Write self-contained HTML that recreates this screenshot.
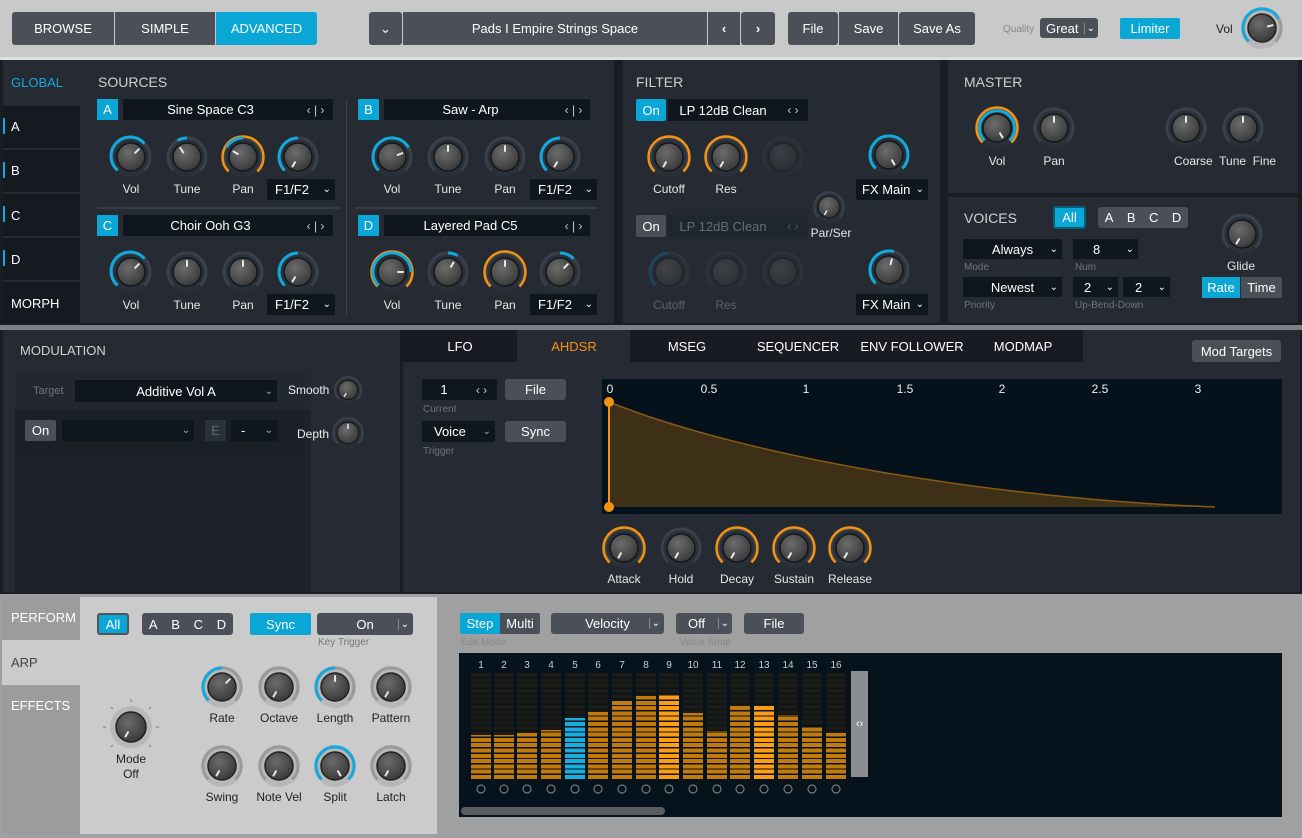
<!DOCTYPE html><html><head><meta charset="utf-8"><style>
*{box-sizing:border-box;margin:0;padding:0}
body{width:1302px;height:838px;overflow:hidden;background:#c9c9c9;font-family:"Liberation Sans",sans-serif;position:relative}
div,svg{position:absolute}
.bx{display:flex;align-items:center;justify-content:center;font-size:13px;color:#fff;white-space:nowrap}
.btn{background:#4b5058;border-radius:3px}
.cy{background:#0aa6d6}
.fd{background:#10161d}
.l{width:80px;margin-left:-40px;text-align:center;color:#e6e6e6;font-size:12px;white-space:nowrap}
.ld{width:80px;margin-left:-40px;text-align:center;color:#222;font-size:12px;white-space:nowrap}
.h{color:#d0d0d0;font-size:14px}
.sm{font-size:10px;color:#6e747c}
.k{width:44px;height:44px}
.b{fill:none;stroke:#12a9dd;stroke-width:3}
.o{fill:none;stroke:#f39312;stroke-width:2.5}
.p{stroke:#e8e8e8;stroke-width:2;stroke-linecap:round}
.ar{color:#ccc;font-size:12px}
.cl{position:absolute;width:20px;top:673px;height:106px;background:repeating-linear-gradient(#1c1b15 0 4px,#07131c 4px 5.3px)}
.fl{position:absolute;width:20px;bottom:59px;background:repeating-linear-gradient(to top,#c27a0a 0 4px,#07131c 4px 5.3px)}
</style></head><body>
<svg width="0" height="0"><defs>
<radialGradient id="g" cx=".4" cy=".35" r=".75"><stop offset="0" stop-color="#6c6c6c"/><stop offset="1" stop-color="#333"/></radialGradient>
<symbol id="kd" viewBox="0 0 44 44"><circle cx="22" cy="22" r="20" fill="#2a3038"/><path d="M8.6 35.4A19 19 0 1 1 35.4 35.4" fill="none" stroke="#3a414b" stroke-width="3"/><circle cx="22" cy="22" r="14" fill="url(#g)" stroke="#13171c" stroke-width="1.5"/></symbol>
<symbol id="kl" viewBox="0 0 44 44"><circle cx="22" cy="22" r="21" fill="#b8b8b8"/><path d="M8.6 35.4A19 19 0 1 1 35.4 35.4" fill="none" stroke="#9a9a9a" stroke-width="3"/><circle cx="22" cy="22" r="14" fill="url(#g)" stroke="#222" stroke-width="1.5"/></symbol>
</defs></svg>

<!-- top bar -->
<div class="bx btn" style="left:12px;top:12px;width:102px;height:33px;border-radius:3px 0 0 3px">BROWSE</div>
<div class="bx btn" style="left:115px;top:12px;width:100px;height:33px;border-radius:0">SIMPLE</div>
<div class="bx cy" style="left:216px;top:12px;width:101px;height:33px;border-radius:0 3px 3px 0">ADVANCED</div>
<div class="bx btn" style="left:369px;top:12px;width:33px;height:33px">&#8964;</div>
<div class="bx btn" style="left:403px;top:12px;width:304px;height:33px;border-radius:0">Pads I Empire Strings Space</div>
<div class="bx btn" style="left:708px;top:12px;width:32px;height:33px;border-radius:0;font-weight:bold">&#8249;</div>
<div class="bx btn" style="left:741px;top:12px;width:34px;height:33px;font-weight:bold">&#8250;</div>
<div class="bx btn" style="left:788px;top:12px;width:50px;height:33px">File</div>
<div class="bx btn" style="left:839px;top:12px;width:59px;height:33px;border-radius:0">Save</div>
<div class="bx btn" style="left:899px;top:12px;width:76px;height:33px">Save As</div>
<div style="left:1003px;top:24px;font-size:10px;color:#888">Quality</div>
<div class="bx btn" style="left:1040px;top:18px;width:58px;height:20px;justify-content:flex-start;padding-left:6px">Great<span style="position:absolute;right:3px;font-size:10px;border-left:1px solid #888;padding-left:2px">&#8964;</span></div>
<div class="bx cy" style="left:1120px;top:18px;width:60px;height:21px;border-radius:2px">Limiter</div>
<div style="left:1216px;top:22px;font-size:12px;color:#222">Vol</div>
<svg class="k" style="left:1240px;top:6px" viewBox="0 0 44 44"><use href="#kl"/><path class="b" d="M8.6 35.4A19 19 0 1 1 38.5 12.5"/><line class="p" x1="27.8" y1="20.4" x2="32.6" y2="19.2"/></svg>

<!-- main dark -->
<div style="left:0;top:57px;width:1302px;height:3px;background:#e0e0e0"></div>
<div style="left:0;top:60px;width:1302px;height:265px;background:#1a1e24"></div>
<div style="left:3px;top:60px;width:611px;height:263px;background:#262b33"></div>
<div style="left:623px;top:60px;width:317px;height:263px;background:#262b33"></div>
<div style="left:948px;top:60px;width:350px;height:133px;background:#262b33"></div>
<div style="left:948px;top:197px;width:350px;height:126px;background:#262b33"></div>
<!-- sidebar -->
<div style="left:11px;top:75px;color:#12a9dd;font-size:13px">GLOBAL</div>
<div style="left:3px;top:106px;width:77px;height:42px;background:#151a20"></div>
<div style="left:3px;top:150px;width:77px;height:42px;background:#151a20"></div>
<div style="left:3px;top:194px;width:77px;height:42px;background:#151a20"></div>
<div style="left:3px;top:238px;width:77px;height:42px;background:#151a20"></div>
<div style="left:3px;top:282px;width:77px;height:41px;background:#151a20"></div>
<div style="left:3px;top:118px;width:2px;height:16px;background:#12a9dd"></div>
<div style="left:3px;top:162px;width:2px;height:16px;background:#12a9dd"></div>
<div style="left:3px;top:206px;width:2px;height:16px;background:#12a9dd"></div>
<div style="left:3px;top:250px;width:2px;height:16px;background:#12a9dd"></div>
<div style="left:11px;top:119px;color:#fff;font-size:13px">A</div>
<div style="left:11px;top:163px;color:#fff;font-size:13px">B</div>
<div style="left:11px;top:208px;color:#fff;font-size:13px">C</div>
<div style="left:11px;top:252px;color:#fff;font-size:13px">D</div>
<div style="left:11px;top:296px;color:#fff;font-size:13px">MORPH</div>

<div class="h" style="left:98px;top:74px">SOURCES</div>
<div style="left:346px;top:100px;width:1px;height:215px;background:#3a414b"></div>
<div style="left:97px;top:207px;width:242px;height:2px;background:#353c45"></div>
<div style="left:355px;top:207px;width:242px;height:2px;background:#353c45"></div>
<!-- source headers -->
<div class="bx cy" style="left:97px;top:99px;width:21px;height:21px">A</div>
<div class="bx fd" style="left:123px;top:99px;width:175px;height:21px">Sine Space C3</div>
<div class="bx fd ar" style="left:298px;top:99px;width:35px;height:21px">&#8249; | &#8250;</div>
<div class="bx cy" style="left:358px;top:99px;width:21px;height:21px">B</div>
<div class="bx fd" style="left:384px;top:99px;width:173px;height:21px">Saw - Arp</div>
<div class="bx fd ar" style="left:557px;top:99px;width:33px;height:21px">&#8249; | &#8250;</div>
<div class="bx cy" style="left:97px;top:215px;width:21px;height:21px">C</div>
<div class="bx fd" style="left:123px;top:215px;width:175px;height:21px">Choir Ooh G3</div>
<div class="bx fd ar" style="left:298px;top:215px;width:35px;height:21px">&#8249; | &#8250;</div>
<div class="bx cy" style="left:358px;top:215px;width:21px;height:21px">D</div>
<div class="bx fd" style="left:384px;top:215px;width:173px;height:21px">Layered Pad C5</div>
<div class="bx fd ar" style="left:557px;top:215px;width:33px;height:21px">&#8249; | &#8250;</div>
<!-- F1/F2 dropdowns -->
<div class="bx fd" style="left:267px;top:179px;width:68px;height:21px;justify-content:flex-start;padding-left:8px">F1/F2<span style="position:absolute;right:4px;font-size:10px">&#8964;</span></div>
<div class="bx fd" style="left:530px;top:179px;width:67px;height:21px;justify-content:flex-start;padding-left:8px">F1/F2<span style="position:absolute;right:4px;font-size:10px">&#8964;</span></div>
<div class="bx fd" style="left:267px;top:294px;width:68px;height:21px;justify-content:flex-start;padding-left:8px">F1/F2<span style="position:absolute;right:4px;font-size:10px">&#8964;</span></div>
<div class="bx fd" style="left:530px;top:294px;width:67px;height:21px;justify-content:flex-start;padding-left:8px">F1/F2<span style="position:absolute;right:4px;font-size:10px">&#8964;</span></div>
<!-- source knobs -->
<svg class="k" style="left:109px;top:135px" viewBox="0 0 44 44"><use href="#kd"/><path class="b" d="M8.6 35.4A19 19 0 1 1 35.4 8.6"/><line class="p" x1="26.2" y1="17.8" x2="29.8" y2="14.2"/></svg>
<svg class="k" style="left:165px;top:135px" viewBox="0 0 44 44"><use href="#kd"/><path class="b" d="M12.5 5.5A19 19 0 0 1 22 3"/><line class="p" x1="18.2" y1="17.4" x2="15.3" y2="13"/></svg>
<svg class="k" style="left:221px;top:135px" viewBox="0 0 44 44"><use href="#kd"/><path class="o" d="M7.5 36.5A20.5 20.5 0 1 1 36.5 36.5"/><path class="b" d="M22 3A19 19 0 0 0 5.5 12.5"/><line class="p" x1="16.8" y1="19" x2="12.5" y2="16.5"/></svg>
<svg class="k" style="left:276px;top:135px" viewBox="0 0 44 44"><use href="#kd"/><path class="b" d="M8.6 35.4A19 19 0 0 1 22 3"/><line class="p" x1="19" y1="27.2" x2="16.5" y2="31.5"/></svg>
<svg class="k" style="left:370px;top:135px" viewBox="0 0 44 44"><use href="#kd"/><path class="b" d="M8.6 35.4A19 19 0 1 1 38.5 12.5"/><line class="p" x1="27.6" y1="20" x2="32.3" y2="18.2"/></svg>
<svg class="k" style="left:426px;top:135px" viewBox="0 0 44 44"><use href="#kd"/><line class="p" x1="22" y1="16" x2="22" y2="11"/></svg>
<svg class="k" style="left:483px;top:135px" viewBox="0 0 44 44"><use href="#kd"/><line class="p" x1="22" y1="16" x2="22" y2="11"/></svg>
<svg class="k" style="left:538px;top:135px" viewBox="0 0 44 44"><use href="#kd"/><path class="b" d="M8.6 35.4A19 19 0 0 1 22 3"/><line class="p" x1="19" y1="27.2" x2="16.5" y2="31.5"/></svg>
<svg class="k" style="left:109px;top:250px" viewBox="0 0 44 44"><use href="#kd"/><path class="b" d="M8.6 35.4A19 19 0 1 1 35.4 8.6"/><line class="p" x1="26.2" y1="17.8" x2="29.8" y2="14.2"/></svg>
<svg class="k" style="left:165px;top:250px" viewBox="0 0 44 44"><use href="#kd"/><line class="p" x1="22" y1="16" x2="22" y2="11"/></svg>
<svg class="k" style="left:221px;top:250px" viewBox="0 0 44 44"><use href="#kd"/><line class="p" x1="22" y1="16" x2="22" y2="11"/></svg>
<svg class="k" style="left:276px;top:250px" viewBox="0 0 44 44"><use href="#kd"/><path class="b" d="M8.6 35.4A19 19 0 0 1 22 3"/><line class="p" x1="19" y1="27.2" x2="16.5" y2="31.5"/></svg>
<svg class="k" style="left:370px;top:250px" viewBox="0 0 44 44"><use href="#kd"/><path class="o" d="M7.5 36.5A20.5 20.5 0 1 1 36.5 36.5"/><path class="b" d="M8.6 35.4A19 19 0 1 1 41 22"/><line class="p" x1="28" y1="22" x2="33" y2="22"/></svg>
<svg class="k" style="left:426px;top:250px" viewBox="0 0 44 44"><use href="#kd"/><path class="b" d="M22 3A19 19 0 0 1 31.5 5.5"/><line class="p" x1="25" y1="16.8" x2="27.5" y2="12.5"/></svg>
<svg class="k" style="left:483px;top:250px" viewBox="0 0 44 44"><use href="#kd"/><path class="o" d="M7.5 36.5A20.5 20.5 0 1 1 36.5 36.5"/><line class="p" x1="22" y1="16" x2="22" y2="11"/></svg>
<svg class="k" style="left:538px;top:250px" viewBox="0 0 44 44"><use href="#kd"/><path class="b" d="M22 3A19 19 0 0 1 35.4 8.6"/><line class="p" x1="26.2" y1="17.8" x2="29.8" y2="14.2"/></svg>
<div class="l" style="left:131px;top:182px">Vol</div><div class="l" style="left:187px;top:182px">Tune</div><div class="l" style="left:243px;top:182px">Pan</div>
<div class="l" style="left:392px;top:182px">Vol</div><div class="l" style="left:448px;top:182px">Tune</div><div class="l" style="left:505px;top:182px">Pan</div>
<div class="l" style="left:131px;top:298px">Vol</div><div class="l" style="left:187px;top:298px">Tune</div><div class="l" style="left:243px;top:298px">Pan</div>
<div class="l" style="left:392px;top:298px">Vol</div><div class="l" style="left:448px;top:298px">Tune</div><div class="l" style="left:505px;top:298px">Pan</div>

<!-- filter -->
<div class="h" style="left:636px;top:74px">FILTER</div>
<div class="bx cy" style="left:636px;top:99px;width:30px;height:22px;border-radius:2px">On</div>
<div class="bx fd" style="left:668px;top:99px;width:110px;height:22px">LP 12dB Clean</div>
<div class="bx fd ar" style="left:778px;top:99px;width:30px;height:22px">&#8249; &#8250;</div>
<div class="bx btn" style="left:636px;top:215px;width:30px;height:22px;border-radius:2px">On</div>
<div class="bx" style="left:668px;top:215px;width:110px;height:22px;background:#20262e;color:#666c74">LP 12dB Clean</div>
<div class="bx ar" style="left:778px;top:215px;width:30px;height:22px;background:#20262e;color:#555">&#8249; &#8250;</div>
<svg class="k" style="left:647px;top:135px" viewBox="0 0 44 44"><use href="#kd"/><path class="o" d="M7.5 36.5A20.5 20.5 0 1 1 36.5 36.5"/><line class="p" x1="19" y1="27.2" x2="16.5" y2="31.5"/></svg>
<svg class="k" style="left:704px;top:135px" viewBox="0 0 44 44"><use href="#kd"/><path class="o" d="M7.5 36.5A20.5 20.5 0 1 1 36.5 36.5"/><line class="p" x1="19" y1="27.2" x2="16.5" y2="31.5"/></svg>
<svg class="k" style="left:761px;top:135px;opacity:.3" viewBox="0 0 44 44"><use href="#kd"/></svg>
<svg class="k" style="left:867px;top:133px" viewBox="0 0 44 44"><use href="#kd"/><path class="b" d="M8.6 35.4A19 19 0 1 1 35.4 35.4"/><line class="p" x1="25" y1="27.2" x2="27.5" y2="31.5"/></svg>
<svg class="k" style="left:812px;top:190px;width:34px;height:34px" viewBox="0 0 44 44"><use href="#kd"/><line class="p" x1="19" y1="27.2" x2="16.5" y2="31.5"/></svg>
<div class="l" style="left:831px;top:226px">Par/Ser</div>
<svg class="k" style="left:647px;top:250px;opacity:.4" viewBox="0 0 44 44"><use href="#kd"/><path class="b" d="M8.6 35.4A19 19 0 0 1 22 3" style="stroke:#1a6e8c"/></svg>
<svg class="k" style="left:704px;top:250px;opacity:.35" viewBox="0 0 44 44"><use href="#kd"/></svg>
<svg class="k" style="left:761px;top:250px;opacity:.35" viewBox="0 0 44 44"><use href="#kd"/></svg>
<svg class="k" style="left:867px;top:248px" viewBox="0 0 44 44"><use href="#kd"/><path class="b" d="M8.6 35.4A19 19 0 0 1 27 3.6"/><line class="p" x1="23.6" y1="16.2" x2="24.8" y2="11.4"/></svg>
<div class="bx fd" style="left:856px;top:179px;width:72px;height:21px;justify-content:flex-start;padding-left:6px">FX Main<span style="position:absolute;right:4px;font-size:10px">&#8964;</span></div>
<div class="bx fd" style="left:856px;top:294px;width:72px;height:21px;justify-content:flex-start;padding-left:6px">FX Main<span style="position:absolute;right:4px;font-size:10px">&#8964;</span></div>
<div class="l" style="left:669px;top:182px">Cutoff</div><div class="l" style="left:726px;top:182px">Res</div>
<div class="l" style="left:669px;top:298px;color:#5c636c">Cutoff</div><div class="l" style="left:726px;top:298px;color:#5c636c">Res</div>

<!-- master -->
<div class="h" style="left:964px;top:74px">MASTER</div>
<svg class="k" style="left:975px;top:106px" viewBox="0 0 44 44"><use href="#kd"/><path class="o" d="M7.5 36.5A20.5 20.5 0 1 1 36.5 36.5"/><path class="b" d="M9.5 34.5A17.5 17.5 0 1 1 34.5 34.5"/><line class="p" x1="25" y1="27.2" x2="27.5" y2="31.5"/></svg>
<svg class="k" style="left:1032px;top:106px" viewBox="0 0 44 44"><use href="#kd"/><line class="p" x1="22" y1="16" x2="22" y2="11"/></svg>
<svg class="k" style="left:1164px;top:106px" viewBox="0 0 44 44"><use href="#kd"/><line class="p" x1="22" y1="16" x2="22" y2="11"/></svg>
<svg class="k" style="left:1221px;top:106px" viewBox="0 0 44 44"><use href="#kd"/><line class="p" x1="22" y1="16" x2="22" y2="11"/></svg>
<div class="l" style="left:997px;top:154px">Vol</div><div class="l" style="left:1054px;top:154px">Pan</div><div class="l" style="left:1214px;top:154px">Coarse&nbsp; Tune&nbsp; Fine</div>
<!-- voices -->
<div class="h" style="left:964px;top:210px">VOICES</div>
<div class="bx cy" style="left:1053px;top:206px;width:33px;height:23px;border:2px solid #0a5e7a;border-radius:3px">All</div>
<div class="bx btn" style="left:1098px;top:207px;width:90px;height:21px;justify-content:space-around">A<span>B</span><span>C</span><span>D</span></div>
<div class="bx fd" style="left:963px;top:239px;width:99px;height:20px">Always<span style="position:absolute;right:4px;font-size:10px">&#8964;</span></div>
<div class="bx fd" style="left:1073px;top:239px;width:65px;height:20px;justify-content:flex-start;padding-left:20px">8<span style="position:absolute;right:4px;font-size:10px">&#8964;</span></div>
<div class="sm" style="left:964px;top:262px">Mode</div><div class="sm" style="left:1075px;top:262px">Num</div>
<div class="bx fd" style="left:963px;top:277px;width:99px;height:20px">Newest<span style="position:absolute;right:4px;font-size:10px">&#8964;</span></div>
<div class="bx fd" style="left:1073px;top:277px;width:45px;height:20px;justify-content:flex-start;padding-left:11px">2<span style="position:absolute;right:4px;font-size:10px">&#8964;</span></div>
<div class="bx fd" style="left:1123px;top:277px;width:47px;height:20px;justify-content:flex-start;padding-left:12px">2<span style="position:absolute;right:4px;font-size:10px">&#8964;</span></div>
<div class="sm" style="left:964px;top:300px">Priority</div><div class="sm" style="left:1075px;top:300px">Up-Bend-Down</div>
<svg class="k" style="left:1220px;top:212px" viewBox="0 0 44 44"><use href="#kd"/><line class="p" x1="19" y1="27.2" x2="16.5" y2="31.5"/></svg>
<div class="l" style="left:1241px;top:259px">Glide</div>
<div class="bx cy" style="left:1202px;top:277px;width:38px;height:21px">Rate</div>
<div class="bx btn" style="left:1241px;top:277px;width:41px;height:21px;border-radius:0 2px 2px 0">Time</div>

<!-- modulation -->
<div style="left:0;top:325px;width:1302px;height:5px;background:#7d8187"></div>
<div style="left:0;top:330px;width:1302px;height:264px;background:#1a1e24"></div>
<div style="left:3px;top:330px;width:397px;height:262px;background:#262b33"></div>
<div style="left:403px;top:330px;width:897px;height:262px;background:#262b33"></div>
<div class="h" style="left:20px;top:343px;font-size:13px">MODULATION</div>
<div style="left:15px;top:370px;width:296px;height:222px;background:#1e232a"></div>
<div style="left:15px;top:370px;width:296px;height:40px;background:#232830"></div>
<div style="left:15px;top:410px;width:288px;height:45px;background:#1b2026"></div>
<div class="sm" style="left:33px;top:385px;font-size:11px">Target</div>
<div class="bx fd" style="left:75px;top:380px;width:202px;height:22px">Additive Vol A<span style="position:absolute;right:4px;font-size:10px;color:#aaa">&#8964;</span></div>
<div style="left:288px;top:383px;color:#eee;font-size:12px">Smooth</div>
<svg class="k" style="left:333px;top:375px;width:30px;height:30px" viewBox="0 0 44 44"><use href="#kd"/><line class="p" x1="19" y1="27.2" x2="16.5" y2="31.5"/></svg>
<div class="bx btn" style="left:25px;top:420px;width:31px;height:21px;border-radius:2px">On</div>
<div class="bx fd" style="left:62px;top:420px;width:132px;height:21px"><span style="position:absolute;right:4px;font-size:10px;color:#aaa">&#8964;</span></div>
<div class="bx" style="left:205px;top:420px;width:21px;height:21px;background:#2b3139;color:#666">E</div>
<div class="bx fd" style="left:231px;top:420px;width:46px;height:21px;justify-content:flex-start;padding-left:10px">-<span style="position:absolute;right:4px;font-size:10px;color:#aaa">&#8964;</span></div>
<div style="left:297px;top:427px;color:#eee;font-size:12px">Depth</div>
<svg class="k" style="left:331px;top:416px;width:34px;height:34px" viewBox="0 0 44 44"><use href="#kd"/><line class="p" x1="22" y1="16" x2="22" y2="11"/></svg>
<!-- tabs -->
<div style="left:400px;top:330px;width:683px;height:32px;background:#181c22"></div>
<div style="left:517px;top:330px;width:113px;height:32px;background:#262b33"></div>
<div class="bx" style="left:420px;top:338px;width:80px;height:16px">LFO</div>
<div class="bx" style="left:534px;top:338px;width:80px;height:16px;color:#f39312">AHDSR</div>
<div class="bx" style="left:647px;top:338px;width:80px;height:16px">MSEG</div>
<div class="bx" style="left:748px;top:338px;width:100px;height:16px">SEQUENCER</div>
<div class="bx" style="left:852px;top:338px;width:120px;height:16px">ENV FOLLOWER</div>
<div class="bx" style="left:983px;top:338px;width:80px;height:16px">MODMAP</div>
<div class="bx btn" style="left:1192px;top:340px;width:89px;height:22px">Mod Targets</div>
<div class="bx fd" style="left:422px;top:379px;width:44px;height:21px">1</div>
<div class="bx fd ar" style="left:466px;top:379px;width:31px;height:21px">&#8249; &#8250;</div>
<div class="bx btn" style="left:505px;top:379px;width:61px;height:21px">File</div>
<div class="sm" style="left:423px;top:404px">Current</div>
<div class="bx fd" style="left:422px;top:421px;width:73px;height:21px;justify-content:flex-start;padding-left:12px">Voice<span style="position:absolute;right:4px;font-size:10px;color:#aaa">&#8964;</span></div>
<div class="bx btn" style="left:505px;top:421px;width:61px;height:21px">Sync</div>
<div class="sm" style="left:423px;top:446px">Trigger</div>
<!-- graph -->
<div style="left:602px;top:379px;width:680px;height:135px;background:#06121b"></div>
<svg style="left:602px;top:379px" width="680" height="135"><path d="M7 23C150 80 400 120 613 128L7 128Z" fill="#3e3016"/><path d="M7 23C150 80 400 120 613 128" fill="none" stroke="#8a5a14" stroke-width="1.5"/><line x1="7" y1="23" x2="7" y2="128" stroke="#f39312" stroke-width="2"/><circle cx="7" cy="23" r="5" fill="#f39312"/><circle cx="7" cy="128" r="5" fill="#f39312"/>
<g fill="#eee" font-family="Liberation Sans" font-size="12" text-anchor="middle"><text x="8" y="14">0</text><text x="107" y="14">0.5</text><text x="204" y="14">1</text><text x="303" y="14">1.5</text><text x="400" y="14">2</text><text x="498" y="14">2.5</text><text x="596" y="14">3</text></g></svg>
<svg class="k" style="left:602px;top:526px" viewBox="0 0 44 44"><use href="#kd"/><path class="o" d="M7.5 36.5A20.5 20.5 0 1 1 36.5 36.5"/><line class="p" x1="19" y1="27.2" x2="16.5" y2="31.5"/></svg>
<svg class="k" style="left:659px;top:526px" viewBox="0 0 44 44"><use href="#kd"/><line class="p" x1="19" y1="27.2" x2="16.5" y2="31.5"/></svg>
<svg class="k" style="left:715px;top:526px" viewBox="0 0 44 44"><use href="#kd"/><path class="o" d="M7.5 36.5A20.5 20.5 0 1 1 36.5 36.5"/><line class="p" x1="19" y1="27.2" x2="16.5" y2="31.5"/></svg>
<svg class="k" style="left:772px;top:526px" viewBox="0 0 44 44"><use href="#kd"/><path class="o" d="M7.5 36.5A20.5 20.5 0 1 1 36.5 36.5"/><line class="p" x1="19" y1="27.2" x2="16.5" y2="31.5"/></svg>
<svg class="k" style="left:828px;top:526px" viewBox="0 0 44 44"><use href="#kd"/><path class="o" d="M7.5 36.5A20.5 20.5 0 1 1 36.5 36.5"/><line class="p" x1="19" y1="27.2" x2="16.5" y2="31.5"/></svg>
<div class="l" style="left:624px;top:572px">Attack</div><div class="l" style="left:681px;top:572px">Hold</div><div class="l" style="left:737px;top:572px">Decay</div><div class="l" style="left:794px;top:572px">Sustain</div><div class="l" style="left:850px;top:572px">Release</div>

<!-- bottom -->
<div style="left:0;top:594px;width:1302px;height:244px;background:#a0a0a0"></div>
<div style="left:80px;top:597px;width:357px;height:237px;background:#cbcbcb"></div>
<div style="left:2px;top:597px;width:78px;height:43px;background:#9c9c9c"></div>
<div style="left:2px;top:640px;width:78px;height:45px;background:#cbcbcb"></div>
<div style="left:2px;top:685px;width:78px;height:43px;background:#9c9c9c"></div>
<div style="left:2px;top:729px;width:78px;height:105px;background:#9c9c9c"></div>
<div style="left:11px;top:610px;color:#fff;font-size:13px">PERFORM</div>
<div style="left:11px;top:655px;color:#444;font-size:13px">ARP</div>
<div style="left:11px;top:698px;color:#fff;font-size:13px">EFFECTS</div>
<div class="bx cy" style="left:97px;top:613px;width:32px;height:22px;border:2px solid #555;border-radius:3px">All</div>
<div class="bx btn" style="left:142px;top:613px;width:91px;height:22px;justify-content:space-around">A<span>B</span><span>C</span><span>D</span></div>
<div class="bx cy" style="left:250px;top:613px;width:61px;height:22px;border-radius:2px">Sync</div>
<div class="bx btn" style="left:317px;top:613px;width:96px;height:22px">On<span style="position:absolute;right:4px;font-size:10px;border-left:1px solid #888;padding-left:2px">&#8964;</span></div>
<div style="left:318px;top:637px;font-size:10px;color:#777">Key Trigger</div>
<svg style="left:101px;top:697px" width="60" height="60" viewBox="0 0 60 60"><g stroke="#888" stroke-width="1.2"><line x1="30" y1="2" x2="30" y2="5"/><line x1="10" y1="10" x2="12" y2="12"/><line x1="50" y1="10" x2="48" y2="12"/><line x1="2" y1="30" x2="5" y2="30"/><line x1="58" y1="30" x2="55" y2="30"/><line x1="10" y1="50" x2="12" y2="48"/><line x1="50" y1="50" x2="48" y2="48"/></g><circle cx="30" cy="30" r="21" fill="#b8b8b8"/><circle cx="30" cy="30" r="15" fill="url(#g)" stroke="#222" stroke-width="1.5"/><line class="p" x1="27" y1="35.2" x2="24.5" y2="39.5"/></svg>
<div class="ld" style="left:131px;top:752px">Mode</div><div class="ld" style="left:131px;top:767px">Off</div>
<svg class="k" style="left:200px;top:665px" viewBox="0 0 44 44"><use href="#kl"/><path class="b" d="M8.6 35.4A19 19 0 0 1 22 3"/><line class="p" x1="26.2" y1="17.8" x2="29.8" y2="14.2"/></svg>
<svg class="k" style="left:257px;top:665px" viewBox="0 0 44 44"><use href="#kl"/><line class="p" x1="19" y1="27.2" x2="16.5" y2="31.5"/></svg>
<svg class="k" style="left:313px;top:665px" viewBox="0 0 44 44"><use href="#kl"/><path class="b" d="M8.6 35.4A19 19 0 0 1 22 3"/><line class="p" x1="22" y1="16" x2="22" y2="11"/></svg>
<svg class="k" style="left:369px;top:665px" viewBox="0 0 44 44"><use href="#kl"/><line class="p" x1="19" y1="27.2" x2="16.5" y2="31.5"/></svg>
<svg class="k" style="left:200px;top:744px" viewBox="0 0 44 44"><use href="#kl"/><line class="p" x1="19" y1="27.2" x2="16.5" y2="31.5"/></svg>
<svg class="k" style="left:257px;top:744px" viewBox="0 0 44 44"><use href="#kl"/><line class="p" x1="19" y1="27.2" x2="16.5" y2="31.5"/></svg>
<svg class="k" style="left:313px;top:744px" viewBox="0 0 44 44"><use href="#kl"/><path class="b" d="M8.6 35.4A19 19 0 1 1 35.4 35.4"/><line class="p" x1="25" y1="27.2" x2="27.5" y2="31.5"/></svg>
<svg class="k" style="left:369px;top:744px" viewBox="0 0 44 44"><use href="#kl"/><line class="p" x1="19" y1="27.2" x2="16.5" y2="31.5"/></svg>
<div class="ld" style="left:222px;top:711px">Rate</div><div class="ld" style="left:279px;top:711px">Octave</div><div class="ld" style="left:335px;top:711px">Length</div><div class="ld" style="left:391px;top:711px">Pattern</div>
<div class="ld" style="left:222px;top:790px">Swing</div><div class="ld" style="left:279px;top:790px">Note Vel</div><div class="ld" style="left:335px;top:790px">Split</div><div class="ld" style="left:391px;top:790px">Latch</div>
<!-- step seq -->
<div class="bx cy" style="left:460px;top:613px;width:40px;height:21px;border-radius:2px 0 0 2px">Step</div>
<div class="bx btn" style="left:500px;top:613px;width:40px;height:21px;border-radius:0 2px 2px 0">Multi</div>
<div class="bx btn" style="left:551px;top:613px;width:113px;height:21px">Velocity<span style="position:absolute;right:4px;font-size:10px;border-left:1px solid #888;padding-left:2px">&#8964;</span></div>
<div class="bx btn" style="left:676px;top:613px;width:56px;height:21px;justify-content:flex-start;padding-left:12px">Off<span style="position:absolute;right:3px;font-size:10px;border-left:1px solid #888;padding-left:2px">&#8964;</span></div>
<div class="bx btn" style="left:744px;top:613px;width:60px;height:21px">File</div>
<div style="left:461px;top:637px;font-size:10px;color:#888">Edit Mode</div>
<div style="left:680px;top:637px;font-size:10px;color:#888">Value Snap</div>
<div style="left:459px;top:653px;width:823px;height:164px;background:#07131c">
<svg style="left:0;top:0" width="823" height="164"><g fill="#ccc" font-family="Liberation Sans" font-size="10" text-anchor="middle"><text x="22" y="15">1</text><text x="45" y="15">2</text><text x="68" y="15">3</text><text x="92" y="15">4</text><text x="116" y="15">5</text><text x="139" y="15">6</text><text x="163" y="15">7</text><text x="187" y="15">8</text><text x="210" y="15">9</text><text x="234" y="15">10</text><text x="258" y="15">11</text><text x="281" y="15">12</text><text x="305" y="15">13</text><text x="329" y="15">14</text><text x="353" y="15">15</text><text x="377" y="15">16</text></g>
<g fill="none" stroke="#777" stroke-width="1.2"><circle cx="22" cy="136" r="4"/><circle cx="45" cy="136" r="4"/><circle cx="68" cy="136" r="4"/><circle cx="92" cy="136" r="4"/><circle cx="116" cy="136" r="4"/><circle cx="139" cy="136" r="4"/><circle cx="163" cy="136" r="4"/><circle cx="187" cy="136" r="4"/><circle cx="210" cy="136" r="4"/><circle cx="234" cy="136" r="4"/><circle cx="258" cy="136" r="4"/><circle cx="281" cy="136" r="4"/><circle cx="305" cy="136" r="4"/><circle cx="329" cy="136" r="4"/><circle cx="353" cy="136" r="4"/><circle cx="377" cy="136" r="4"/></g></svg>
</div>
<div style="left:851px;top:671px;width:17px;height:106px;background:#8a8d91;color:#fff;font-size:11px;display:flex;align-items:center;justify-content:center">&#8249;&#8250;</div>
<div style="left:461px;top:807px;width:204px;height:8px;border-radius:4px;background:#5a5e63"></div>
<div class="cl" style="left:471px"></div><div class="fl" style="left:471px;height:44px"></div>
<div class="cl" style="left:494px"></div><div class="fl" style="left:494px;height:44px"></div>
<div class="cl" style="left:517px"></div><div class="fl" style="left:517px;height:46px"></div>
<div class="cl" style="left:541px"></div><div class="fl" style="left:541px;height:49px"></div>
<div class="cl" style="left:565px"></div><div class="fl" style="left:565px;height:61px;background:repeating-linear-gradient(to top,#17aee0 0 4px,#07131c 4px 5.3px)"></div>
<div class="cl" style="left:588px"></div><div class="fl" style="left:588px;height:67px"></div>
<div class="cl" style="left:612px"></div><div class="fl" style="left:612px;height:79px"></div>
<div class="cl" style="left:636px"></div><div class="fl" style="left:636px;height:83px"></div>
<div class="cl" style="left:659px"></div><div class="fl" style="left:659px;height:84px;background:repeating-linear-gradient(to top,#ff9d12 0 4px,#07131c 4px 5.3px)"></div>
<div class="cl" style="left:683px"></div><div class="fl" style="left:683px;height:66px"></div>
<div class="cl" style="left:707px"></div><div class="fl" style="left:707px;height:48px"></div>
<div class="cl" style="left:730px"></div><div class="fl" style="left:730px;height:73px"></div>
<div class="cl" style="left:754px"></div><div class="fl" style="left:754px;height:73px;background:repeating-linear-gradient(to top,#ff9d12 0 4px,#07131c 4px 5.3px)"></div>
<div class="cl" style="left:778px"></div><div class="fl" style="left:778px;height:64px"></div>
<div class="cl" style="left:802px"></div><div class="fl" style="left:802px;height:53px"></div>
<div class="cl" style="left:826px"></div><div class="fl" style="left:826px;height:46px"></div>
</body></html>
